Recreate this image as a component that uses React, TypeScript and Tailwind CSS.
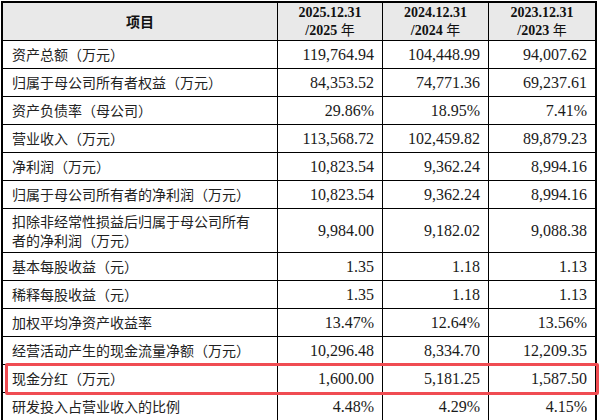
const rows: { label: string; values: string[]; tall?: boolean }[] = [
  { label: "资产总额（万元）", values: ["119,764.94", "104,448.99", "94,007.62"] },
  { label: "归属于母公司所有者权益（万元）", values: ["84,353.52", "74,771.36", "69,237.61"] },
  { label: "资产负债率（母公司）", values: ["29.86%", "18.95%", "7.41%"] },
  { label: "营业收入（万元）", values: ["113,568.72", "102,459.82", "89,879.23"] },
  { label: "净利润（万元）", values: ["10,823.54", "9,362.24", "8,994.16"] },
  { label: "归属于母公司所有者的净利润（万元）", values: ["10,823.54", "9,362.24", "8,994.16"] },
  { label: "扣除非经常性损益后归属于母公司所有\n者的净利润（万元）", values: ["9,984.00", "9,182.02", "9,088.38"], tall: true },
  { label: "基本每股收益（元）", values: ["1.35", "1.18", "1.13"] },
  { label: "稀释每股收益（元）", values: ["1.35", "1.18", "1.13"] },
  { label: "加权平均净资产收益率", values: ["13.47%", "12.64%", "13.56%"] },
  { label: "经营活动产生的现金流量净额（万元）", values: ["10,296.48", "8,334.70", "12,209.35"] },
  { label: "现金分红（万元）", values: ["1,600.00", "5,181.25", "1,587.50"] },
  { label: "研发投入占营业收入的比例", values: ["4.48%", "4.29%", "4.15%"] },
];

const years = ["2025", "2024", "2023"];

const cjk = "font-['Noto_Sans_CJK_SC',sans-serif]";
const serif = "font-['Liberation_Serif','Noto_Sans_CJK_SC',serif]";

export default function App() {
  return (
    <div className="relative h-[420px] w-[600px] overflow-hidden bg-white pl-px pt-px">
      <div className="grid w-[596px] grid-cols-[274px_104px_105px_106px] gap-px border-2 border-black bg-black">
        {/* header */}
        <div className={`flex h-[37px] items-center justify-center bg-[#e9e9e9] text-[14px] font-bold text-[#111] ${cjk}`}>
          项目
        </div>
        {years.map((y) => (
          <div
            key={y}
            className={`flex h-[37px] flex-col items-center justify-center bg-[#e9e9e9] text-[14px] leading-[17px] font-bold text-[#111] ${serif}`}
          >
            <span>{y}.12.31</span>
            <span>
              /{y} <span className={`font-normal ${cjk}`}>年</span>
            </span>
          </div>
        ))}

        {rows.map((r) => (
          <Row key={r.label} {...r} />
        ))}
      </div>

      {/* red highlight around the dividend row */}
      <div className="absolute left-[5px] top-[363px] h-[32px] w-[594px] rounded-[2px] border-[3px] border-[#f04c52]" />
    </div>
  );
}

function Row({ label, values, tall }: { label: string; values: string[]; tall?: boolean }) {
  const h = tall ? "h-[43px]" : "h-[27px]";
  return (
    <>
      <div
        className={`flex ${h} items-center bg-white pl-[9px] text-[14px] leading-[19px] whitespace-pre-line text-[#222] ${cjk}`}
      >
        <span>{label}</span>
      </div>
      {values.map((v, i) => (
        <div
          key={i}
          className={`flex ${h} items-center justify-end bg-white pr-[8px] text-[16px] text-[#1a1a1a] ${serif}`}
        >
          {v}
        </div>
      ))}
    </>
  );
}
